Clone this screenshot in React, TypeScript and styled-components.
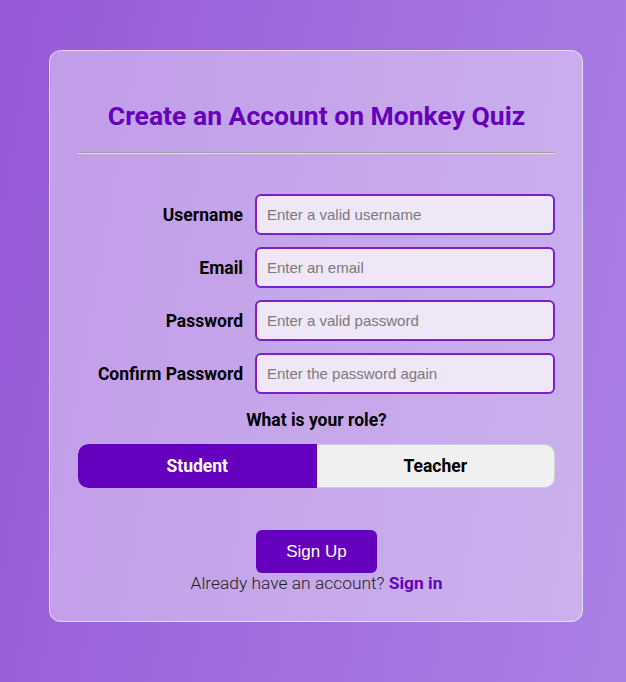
import React, { useState } from "react";
import styled, { createGlobalStyle } from "styled-components";

const Global = createGlobalStyle`
  html, body { margin: 0; padding: 0; }
  body {
    min-height: 682px;
    background: linear-gradient(100deg, #9858d9 0%, #a06ddd 50%, #aa80e4 100%);
    font-family: Roboto, "Liberation Sans", sans-serif;
  }
`;

const Page = styled.div`
  min-height: 682px;
  padding: 50px 0 0 49px;
  box-sizing: border-box;
`;

const Card = styled.div`
  width: 534px;
  height: 572px;
  box-sizing: border-box;
  border: 1px solid rgba(255, 255, 255, 0.55);
  border-radius: 12px;
  background: rgba(255, 255, 255, 0.4);
  padding: 0 27px 0 28px;
  display: flex;
  flex-direction: column;
`;

const Title = styled.h1`
  margin: 50px 0 0;
  font-family: Roboto, sans-serif;
  font-weight: 700;
  font-size: 26.5px;
  line-height: 30px;
  color: #6600bb;
  text-align: center;
`;

const Divider = styled.hr`
  margin: 21px 0 0;
  border: none;
  border-top: 1px solid #9e9e9e;
  border-bottom: 1px solid #e0e0e0;
  height: 0;
`;

const Form = styled.div`
  margin-top: 40px;
  display: flex;
  flex-direction: column;
  gap: 12px;
`;

const Row = styled.div`
  display: flex;
  align-items: center;
  gap: 12px;
`;

const Label = styled.label`
  flex: 1;
  text-align: right;
  font-family: Roboto, sans-serif;
  font-weight: 700;
  font-size: 17.5px;
  color: #000;
`;

const Input = styled.input`
  width: 300px;
  height: 41px;
  box-sizing: border-box;
  border: 2px solid #7a1fd1;
  border-radius: 6px;
  background: #efe6f7;
  padding: 0 10px;
  font-family: "Liberation Sans", Arial, sans-serif;
  font-size: 15px;
  color: #000;
  outline: none;
  &::placeholder { color: #7a7a7a; }
`;

const RoleQuestion = styled.div`
  margin-top: 15px;
  text-align: center;
  font-family: Roboto, sans-serif;
  font-weight: 700;
  font-size: 17.5px;
  line-height: 22px;
  color: #000;
`;

const Toggle = styled.div`
  margin-top: 13px;
  display: grid;
  grid-template-columns: 1fr 1fr;
  height: 44px;
  border-radius: 10px;
  overflow: hidden;
`;

const ToggleButton = styled.button<{ $active: boolean }>`
  margin: 0;
  box-sizing: border-box;
  border: ${(p) => (p.$active ? "none" : "1px solid #cfcfcf")};
  border-left: none;
  border-radius: ${(p) => (p.$active ? "10px 0 0 10px" : "0 10px 10px 0")};
  font-family: Roboto, sans-serif;
  font-weight: 700;
  font-size: 17.5px;
  cursor: pointer;
  background: ${(p) => (p.$active ? "#6600bf" : "#f0f0f0")};
  color: ${(p) => (p.$active ? "#fff" : "#000")};
`;

const Footer = styled.div`
  margin-top: 42px;
  display: flex;
  flex-direction: column;
  align-items: center;
`;

const SubmitButton = styled.button`
  width: 121px;
  height: 43px;
  border: none;
  border-radius: 6px;
  background: #6600bf;
  color: #fff;
  font-family: "Liberation Sans", Arial, sans-serif;
  font-size: 17px;
  cursor: pointer;
`;

const SignInText = styled.p`
  margin: 0;
  font-family: Roboto, sans-serif;
  font-weight: 300;
  font-size: 17.4px;
  line-height: 20px;
  color: #222;
`;

const SignInLink = styled.a`
  font-weight: 700;
  color: #6600bb;
  text-decoration: none;
`;

const fields = [
  { label: "Username", placeholder: "Enter a valid username", type: "text" },
  { label: "Email", placeholder: "Enter an email", type: "email" },
  { label: "Password", placeholder: "Enter a valid password", type: "password" },
  { label: "Confirm Password", placeholder: "Enter the password again", type: "password" },
];

export default function App() {
  const [role, setRole] = useState<"student" | "teacher">("student");
  return (
    <>
      <Global />
      <Page>
        <Card>
          <Title>Create an Account on Monkey Quiz</Title>
          <Divider />
          <Form>
            {fields.map((f) => (
              <Row key={f.label}>
                <Label>{f.label}</Label>
                <Input type={f.type} placeholder={f.placeholder} />
              </Row>
            ))}
          </Form>
          <RoleQuestion>What is your role?</RoleQuestion>
          <Toggle>
            <ToggleButton $active={role === "student"} onClick={() => setRole("student")}>
              Student
            </ToggleButton>
            <ToggleButton $active={role === "teacher"} onClick={() => setRole("teacher")}>
              Teacher
            </ToggleButton>
          </Toggle>
          <Footer>
            <SubmitButton>Sign Up</SubmitButton>
            <SignInText>
              Already have an account? <SignInLink href="#">Sign in</SignInLink>
            </SignInText>
          </Footer>
        </Card>
      </Page>
    </>
  );
}
